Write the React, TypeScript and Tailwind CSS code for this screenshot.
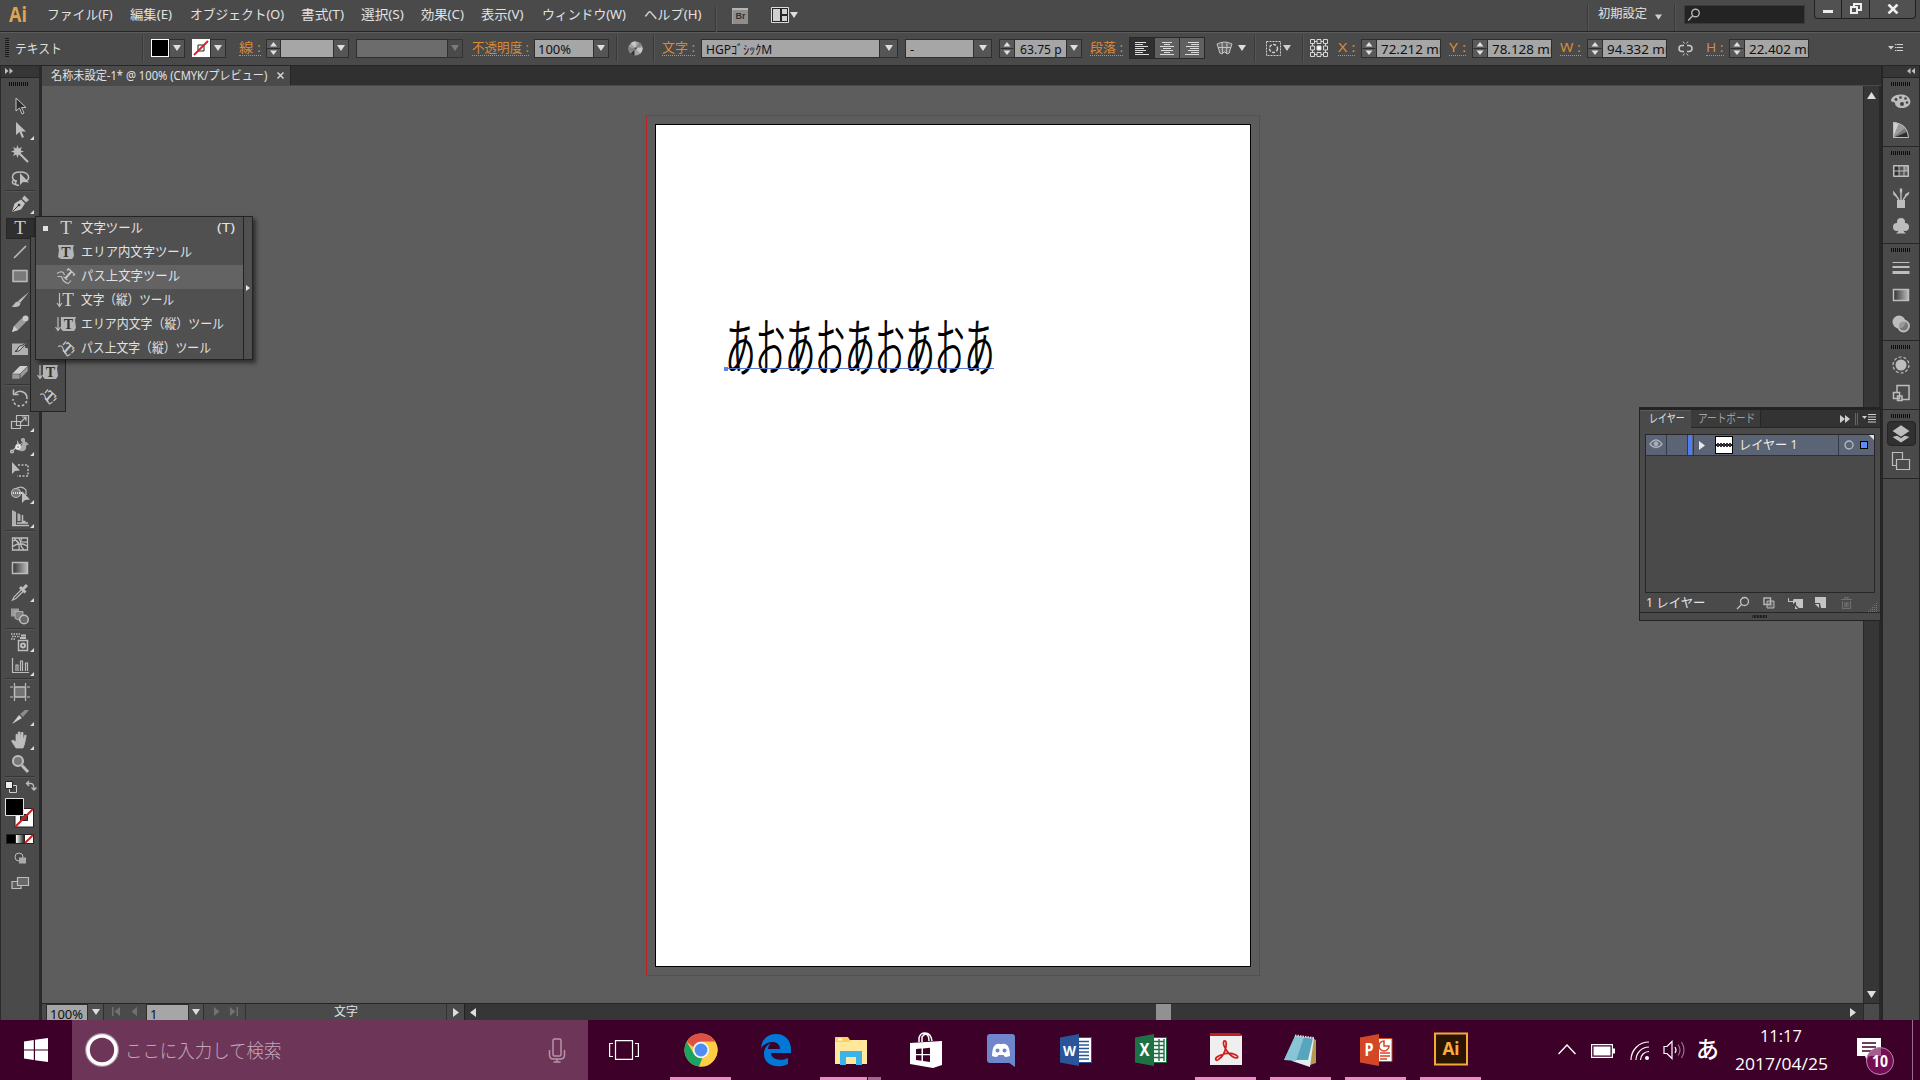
import React from 'react';

interface ChildProps {
  className?: string;
  children?: React.ReactNode;
}

// Squeezes (or stretches) one line of text to the width of its box.
const Fit: React.FC<ChildProps> = ({ className = '', children }) => {
  const outer = React.useRef<HTMLDivElement>(null);
  const inner = React.useRef<HTMLSpanElement>(null);
  const [scale, setScale] = React.useState(1);

  React.useLayoutEffect(() => {
    if (outer.current && inner.current && inner.current.offsetWidth > 0) {
      setScale(outer.current.clientWidth / inner.current.offsetWidth);
    }
  }, [children]);

  return (
    <div ref={outer} className={`shrink-0 whitespace-nowrap ${className}`}>
      <span ref={inner} className="inline-block origin-left" style={{ transform: `scaleX(${scale})` }}>
        {children}
      </span>
    </div>
  );
};

const Ico: React.FC<ChildProps> = ({ className = '', children }) => (
  <svg
    viewBox="0 0 24 24"
    className={`w-6 h-6 shrink-0 block ${className}`}
    fill="none"
    stroke="#bdbdbd"
    strokeWidth="1.5"
  >
    {children}
  </svg>
);

const Sep: React.FC<ChildProps> = ({ className = '' }) => (
  <div className={`w-[2px] h-[27px] shrink-0 bg-[#393939] border-r border-[#565656] ${className}`} />
);

const Caret: React.FC<ChildProps> = ({ className = 'text-[#dedede]' }) => (
  <svg viewBox="0 0 8 6" className={`w-2 h-1.5 shrink-0 ${className}`}>
    <path d="M0 0h8L4 6z" fill="currentColor" />
  </svg>
);

const DropButton: React.FC<ChildProps> = ({ className = '' }) => (
  <div className={`h-[19px] shrink-0 flex items-center justify-center bg-[#555555] border border-[#2e2e2e] ${className}`}>
    <Caret />
  </div>
);

const Spinner: React.FC<ChildProps> = ({ className = '' }) => (
  <div className={`h-[19px] shrink-0 bg-[#5a5a5a] border border-[#2e2e2e] ${className}`}>
    <svg viewBox="0 0 13 17" className="w-full h-full">
      <path d="M3 6.500h7L6.500 2zM3 10.500h7L6.500 15z" fill="#e0e0e0" />
      <path d="M0 8.500h13" stroke="#2e2e2e" />
    </svg>
  </div>
);

const Field: React.FC<ChildProps> = ({ className = '', children }) => (
  <div
    className={`h-[19px] shrink-0 overflow-hidden bg-[#a6a6a6] border border-[#2e2e2e] text-[#111] text-[13px] leading-[18px] ${className}`}
  >
    {children}
  </div>
);

const OrangeLabel: React.FC<ChildProps> = ({ className = '', children }) => (
  <Fit className={`h-[16px] text-[13px] leading-[15px] text-[#d98b36] border-b border-dotted border-[#d98b36] ${className}`}>
    {children}
  </Fit>
);

const Grip: React.FC<ChildProps> = ({ className = '' }) => (
  <svg viewBox="0 0 20 4" className={`w-5 h-1 shrink-0 ${className}`}>
    <path d="M0 2h20" stroke="#0d0d0d" strokeWidth="4" strokeDasharray="1 1" />
  </svg>
);

const MenuBar = () => (
  <div className="h-8 shrink-0 flex items-start bg-[#4a4a4a] border-b border-[#262626] text-[#e2e2e2] text-[13px] leading-[28px]">
    <Fit className="ml-[9px] w-[18px] font-['Open_Sans',sans-serif] font-bold text-[21px] leading-[28px] text-[#dfa551]">Ai</Fit>
    <Fit className="ml-[20px] w-[66px]">ファイル(F)</Fit>
    <Fit className="ml-[17px] w-[42px]">編集(E)</Fit>
    <Fit className="ml-[18px] w-[94px]">オブジェクト(O)</Fit>
    <Fit className="ml-[17px] w-[43px]">書式(T)</Fit>
    <Fit className="ml-[17px] w-[43px]">選択(S)</Fit>
    <Fit className="ml-[17px] w-[43px]">効果(C)</Fit>
    <Fit className="ml-[17px] w-[43px]">表示(V)</Fit>
    <Fit className="ml-[18px] w-[84px]">ウィンドウ(W)</Fit>
    <Fit className="ml-[18px] w-[57px]">ヘルプ(H)</Fit>
    <Sep className="ml-[14px] mt-1.5 h-[19px]" />
    <div className="ml-[15px] mt-2 w-4 h-4 shrink-0 bg-[#8e8e8e] border-t-2 border-l border-t-[#b5b5b5] border-l-[#a5a5a5] text-[9px] leading-[13px] text-center font-bold text-[#333] font-['Liberation_Sans',sans-serif]">
      Br
    </div>
    <svg viewBox="0 0 18 16" className="ml-[23px] mt-[7px] w-[18px] h-4 shrink-0">
      <path d="M.5.5h17v15H.5z" fill="#262626" stroke="#dcdcdc" />
      <path d="M2 2h7v12H2zM11 2h5v5h-5zM11 9h5v5h-5z" fill="#cfcfcf" />
    </svg>
    <Caret className="ml-px mt-3 text-[#dedede]" />
    <div className="flex-1" />
    <Sep className="mt-1 h-5" />
    <Fit className="ml-[9px] w-[49px] text-[12px] leading-[27px]">初期設定</Fit>
    <Caret className="ml-[8px] mt-[14px] w-[7px] h-1 text-[#cfcfcf]" />
    <Sep className="ml-[12px] mt-1 h-5" />
    <div className="ml-2 mt-[5px] w-[121px] h-[19px] shrink-0 bg-[#232323] border border-[#3a3a3a] flex items-center">
      <svg viewBox="0 0 14 14" className="ml-0.5 w-[14px] h-[14px]" fill="none" stroke="#b5b5b5" strokeWidth="1.4">
        <circle cx="8.500" cy="5" r="3.800" />
        <path d="M5.700 7.800L1.200 12.600" />
      </svg>
    </div>
    <div className="ml-[9px] mr-[4px] w-[102px] h-[19px] shrink-0 flex border border-t-0 border-[#202020] rounded-b bg-[#515151]">
      <div className="w-[27px] flex justify-center border-r border-[#202020]">
        <div className="mt-2.5 w-[10px] h-[3px] bg-[#ededed]" />
      </div>
      <div className="w-[28px] flex justify-center border-r border-[#202020]">
        <svg viewBox="0 0 12 12" className="mt-[3px] w-3 h-3" fill="none" stroke="#ededed" strokeWidth="2">
          <path d="M4 3V1h7v6H8M1 4h6v6H1z" />
        </svg>
      </div>
      <div className="flex-1 flex justify-center">
        <svg viewBox="0 0 12 10" className="mt-1 w-3 h-2.5" stroke="#ededed" strokeWidth="2.600">
          <path d="M1.500.5l9 9M10.500.5l-9 9" />
        </svg>
      </div>
    </div>
  </div>
);

const AlignIcon: React.FC<{ d: string }> = ({ d }) => (
  <svg viewBox="0 0 14 15" className="w-[14px] h-[15px]">
    <path d={d} stroke="#dcdcdc" />
  </svg>
);

const ControlBar = () => (
  <div className="h-[34px] shrink-0 flex items-center pb-[2px] bg-[#4a4a4a] border-t border-b border-t-[#5c5c5c] border-b-[#262626]">
    <svg viewBox="0 0 4 20" className="ml-[5px] w-1 h-5 shrink-0">
      <path d="M2 0v20" stroke="#1c1c1c" strokeWidth="4" strokeDasharray="1 1" />
    </svg>
    <Fit className="ml-[6px] w-[47px] text-[13px] leading-[18px] text-[#dedede]">テキスト</Fit>
    <Sep className="ml-[80px]" />
    <div className="ml-[7px] w-[18px] h-[18px] shrink-0 bg-black border border-white" />
    <DropButton className="w-4" />
    <svg viewBox="0 0 18 18" className="ml-[7px] w-[18px] h-[18px] shrink-0">
      <path d="M0 0h18v18H0z" fill="#fff" />
      <path d="M6 6h6v6H6z" fill="none" stroke="#222" />
      <path d="M2 16L16 2" stroke="#d8232a" strokeWidth="2" />
    </svg>
    <DropButton className="w-4" />
    <OrangeLabel className="ml-[13px] w-[22px]">線 :</OrangeLabel>
    <Spinner className="ml-[5px] w-[15px]" />
    <Field className="w-[53px] border-l-0" />
    <DropButton className="w-[15px] border-l-0" />
    <div className="ml-[7px] w-[92px] h-[19px] shrink-0 bg-[#6c6c6c] border border-[#2e2e2e]" />
    <div className="w-[15px] h-[19px] shrink-0 flex items-center justify-center border border-l-0 border-[#333]">
      <Caret className="text-[#7b7b7b]" />
    </div>
    <OrangeLabel className="ml-[9px] w-[57px]">不透明度 :</OrangeLabel>
    <Field className="ml-[5px] w-[60px]">
      <Fit className="ml-[3px] w-[33px]">100%</Fit>
    </Field>
    <DropButton className="w-[15px] border-l-0" />
    <Sep className="ml-[7px]" />
    <svg viewBox="0 0 15 15" className="ml-[10px] w-[15px] h-[15px] shrink-0">
      <circle cx="7.500" cy="7.500" r="7" fill="#a3a3a3" />
      <path d="M7.500 7.500L3 2a7 7 0 015-1.400zM7.500 7.500l7-1a7 7 0 01-2 6z" fill="#c9c9c9" />
      <path d="M7.500 7.500L2 12A7 7 0 01.7 6zM7.500 7.500l4-6a7 7 0 012.500 3z" fill="#838383" />
      <path d="M6.500 8.500L2.500 12.500a7 7 0 004 2z" fill="#333" />
      <circle cx="7.500" cy="7.500" r="1.200" fill="#555" />
    </svg>
    <Sep className="ml-[10px]" />
    <OrangeLabel className="ml-[7px] w-[33px]">文字 :</OrangeLabel>
    <Field className="ml-[6px] w-[179px] leading-[15px]">
      <Fit className="ml-1 w-[66px]">HGPｺﾞｼｯｸM</Fit>
    </Field>
    <DropButton className="w-[18px] border-l-0" />
    <Field className="ml-[7px] w-[69px]">
      <span className="ml-1">-</span>
    </Field>
    <DropButton className="w-[18px] border-l-0" />
    <Spinner className="ml-[7px] w-[16px]" />
    <Field className="w-[52px] border-l-0">
      <Fit className="ml-[5px] w-[42px]">63.75 p</Fit>
    </Field>
    <DropButton className="w-[15px] border-l-0" />
    <OrangeLabel className="ml-[8px] w-[33px]">段落 :</OrangeLabel>
    <div className="ml-[6px] w-[76px] h-[22px] shrink-0 flex bg-[#606060] border border-[#292929]">
      <div className="w-[25px] flex items-center justify-center bg-[#303030] border-r border-[#292929]">
        <AlignIcon d="M0 1.500h11M0 3.500h8M0 5.500h13M0 7.500h9M0 9.500h11M0 11.500h8M0 13.500h14" />
      </div>
      <div className="w-[25px] flex items-center justify-center border-r border-[#292929]">
        <AlignIcon d="M2 1.500h10M4 3.500h6M0 5.500h14M3 7.500h8M1 9.500h12M4 11.500h6M0 13.500h14" />
      </div>
      <div className="flex-1 flex items-center justify-center">
        <AlignIcon d="M3 1.500h11M6 3.500h8M1 5.500h13M5 7.500h9M3 9.500h11M6 11.500h8M0 13.500h14" />
      </div>
    </div>
    <svg viewBox="0 0 17 14" className="ml-[11px] w-[17px] h-[14px] shrink-0" fill="#686868" stroke="#c4c4c4">
      <path d="M1 3q7.500-4 15 0l-2 6q0 4-3 4l-2-2H8l-2 2q-3 0-3-4z" />
      <path d="M6 1.500l.5 11M11 1.500l-.5 11M2 6.500h13" />
    </svg>
    <Caret className="ml-[5px] text-[#dedede]" />
    <Sep className="ml-[8px]" />
    <svg viewBox="0 0 15 15" className="ml-[10px] w-[15px] h-[15px] shrink-0" fill="none" stroke="#cfcfcf">
      <path d="M.5.5h14v14H.5z" strokeDasharray="2 1" />
      <circle cx="7.500" cy="7.500" r="4" strokeDasharray="3 1.500" strokeWidth="1.500" />
    </svg>
    <Caret className="ml-[2px] text-[#cfcfcf]" />
    <Sep className="ml-[11px]" />
    <svg viewBox="0 0 20 20" className="ml-[5px] w-5 h-5 shrink-0" fill="none" stroke="#d6d6d6">
      <path d="M1.500 1.500h4v4h-4zM8 1.500h4v4H8zM14.500 1.500h4v4h-4zM1.500 8h4v4h-4zM14.500 8h4v4h-4zM1.500 14.500h4v4h-4zM8 14.500h4v4H8zM14.500 14.500h4v4h-4z" />
      <path d="M5.500 3.500H8M12 3.500h2.500M5.500 16.500H8M12 16.500h2.500M3.500 5.500V8M3.500 12v2.500M16.500 5.500V8M16.500 12v2.500" />
      <path d="M8 8h4v4H8z" fill="#fff" />
    </svg>
    <OrangeLabel className="ml-[9px] w-[17px]">X :</OrangeLabel>
    <Spinner className="ml-[6px] w-4" />
    <Field className="w-[64px] border-l-0"><Fit className="ml-1 w-[70px]">72.212 mm</Fit></Field>
    <OrangeLabel className="ml-[8px] w-[17px]">Y :</OrangeLabel>
    <Spinner className="ml-[6px] w-4" />
    <Field className="w-[64px] border-l-0"><Fit className="ml-1 w-[70px]">78.128 mm</Fit></Field>
    <OrangeLabel className="ml-[8px] w-[21px]">W :</OrangeLabel>
    <Spinner className="ml-[6px] w-4" />
    <Field className="w-[64px] border-l-0"><Fit className="ml-1 w-[70px]">94.332 mm</Fit></Field>
    <svg viewBox="0 0 15 15" className="ml-[11px] w-[15px] h-[15px] shrink-0" fill="none" stroke="#c9c9c9" strokeWidth="1.500">
      <path d="M6 4.500H4a3 3 0 000 6h2M9 4.500h2a3 3 0 010 6H9" />
      <path d="M5 .5l1.500 2M10 .5l-1.500 2M5 14.500l1.500-2M10 14.500l-1.500-2" strokeWidth="1" />
    </svg>
    <OrangeLabel className="ml-[13px] w-[18px]">H :</OrangeLabel>
    <Spinner className="ml-[5px] w-4" />
    <Field className="w-[64px] border-l-0"><Fit className="ml-1 w-[70px]">22.402 mm</Fit></Field>
    <div className="flex-1" />
    <svg viewBox="0 0 15 10" className="mr-[17px] w-[15px] h-2.5 shrink-0">
      <path d="M0 3h6L3 6.500z" fill="#d0d0d0" />
      <path d="M7 1.500h8M7 4.500h8M7 7.500h8" stroke="#d0d0d0" strokeDasharray="1.500 .5 8" />
    </svg>
  </div>
);

const AreaTypeIcon = () => (
  <>
    <path d="M4 5h16l-1 3 1 8-2 3H7l-3-2 1-7z" fill="#b5b5b5" stroke="none" />
    <text x="12" y="17" textAnchor="middle" fontSize="14" fontWeight="bold" fill="#333" stroke="none" className="font-['Liberation_Serif',serif]">T</text>
  </>
);

const VerticalAreaTypeIcon = () => (
  <>
    <path d="M4 5v13M1.500 15L4 18.500 6.500 15" strokeWidth="1.200" />
    <path d="M7 5h15l-1 3 1 8-2 3H9l-2-2z" fill="#b5b5b5" stroke="none" />
    <text x="14.500" y="17" textAnchor="middle" fontSize="14" fontWeight="bold" fill="#333" stroke="none" className="font-['Liberation_Serif',serif]">T</text>
  </>
);

const PathTypeIcon = () => (
  <>
    <path d="M3 9.500q6-4 7.500 1.500" strokeWidth="1.100" />
    <path d="M3.500 12.500l4 0q1.500 6 7 7l2.500-3" strokeWidth="1.100" />
    <text x="14" y="15" textAnchor="middle" fontSize="15" fill="#d0d0d0" stroke="#d0d0d0" strokeWidth=".4" transform="rotate(42 13 11)" className="font-['Liberation_Serif',serif]">T</text>
  </>
);

const VerticalPathTypeIcon = () => (
  <>
    <path d="M4 10.500q4-2 5 2t4.500 7.500l3-2" strokeWidth="1.100" />
    <text x="14" y="17" textAnchor="middle" fontSize="15" fill="#d0d0d0" stroke="#d0d0d0" strokeWidth=".4" transform="rotate(42 13 12)" className="font-['Liberation_Serif',serif]">T</text>
    <path d="M9 9l3-3.500M17.500 17l3-3" strokeWidth="1.400" />
  </>
);

const SerifT: React.FC<{ x?: number }> = ({ x = 12 }) => (
  <text x={x} y="18" textAnchor="middle" fontSize="19" fill="#d0d0d0" stroke="none" className="font-['Liberation_Serif',serif]">T</text>
);

const toolGroups: { more: boolean; active?: boolean; art: React.ReactNode }[][] = [
  [
    { more: false, art: <path d="M8 4v13l3.500-3 2.500 6 2-1-2.500-5.500H18z" fill="#2d2d2d" stroke="#c4c4c4" strokeWidth="1" /> },
    { more: true, art: <path d="M8 4v13l3.500-3 2.500 6 2-1-2.500-5.500H18z" fill="#bdbdbd" stroke="none" /> },
    {
      more: false,
      art: (
        <>
          <path d="M9.500 3l1.200 3.500L14 5l-1.500 3.300L16 9.500l-3.500 1.200L14 14l-3.300-1.500L9.500 16l-1.200-3.500L5 14l1.500-3.300L3 9.500l3.500-1.200L5 5l3.300 1.500z" fill="#bdbdbd" stroke="none" />
          <path d="M12 12l8 8" strokeWidth="2.200" />
        </>
      ),
    },
    {
      more: false,
      art: (
        <>
          <path d="M9 15c-6 0-7-9 3-9s10 7 6 9M6 14c-3 1-1 5 1 4s0-3-1-4M7 18q2 2 4 1" />
          <path d="M12 7v12l3-3 6 .5z" fill="#bdbdbd" stroke="none" />
        </>
      ),
    },
  ],
  [
    {
      more: true,
      art: (
        <>
          <path d="M4 20l2.500-8.500L13 7.500l4 4-4 6z" fill="#c4c4c4" stroke="none" />
          <path d="M4.500 19.500l6-6" stroke="#444" strokeWidth="1" />
          <path d="M14 6.500l4 4 3-2.500-4.500-4.500z" fill="#bdbdbd" stroke="none" />
          <circle cx="11" cy="13" r="1.300" fill="#333" stroke="none" />
        </>
      ),
    },
    { more: false, active: true, art: <SerifT /> },
    { more: false, art: <path d="M6 18L18 6" /> },
    { more: false, art: <path d="M5 6.500h14v11H5z" fill="#7a7a7a" /> },
    { more: false, art: <path d="M21 4l-9 11-2-2zM10 13.500l2.500 2c-1 4-5 4-9 3 3-1 3-5 6.500-5z" fill="#bdbdbd" stroke="none" /> },
    {
      more: false,
      art: (
        <>
          <path d="M4 20l2-6 8-8 4 4-8 8z" fill="#9c9c9c" stroke="none" />
          <path d="M4 20l2-6 4 4z" fill="#d0d0d0" stroke="none" />
          <circle cx="17.500" cy="6.500" r="3" fill="#c9c9c9" stroke="none" />
        </>
      ),
    },
    {
      more: false,
      art: (
        <>
          <path d="M4 7.500h13v4l3 1v6.500H4z" fill="#b0b0b0" stroke="none" />
          <path d="M21.500 4l-8 8.500q-2 3.500-6.500 3 2.500-1 3-3.500 1-2.500 4-2.500z" fill="#c9c9c9" stroke="#3a3a3a" strokeWidth="1" />
        </>
      ),
    },
    {
      more: false,
      art: (
        <>
          <path d="M4 14l8-8h8l-8 8z" fill="#cfcfcf" stroke="none" />
          <path d="M4 14h8v5H4zM12 14l8-8v5l-8 8z" fill="#989898" stroke="#555" strokeWidth=".6" />
        </>
      ),
    },
  ],
  [
    { more: false, art: <path d="M7 7.500a7 7 0 0112 5.500 7 7 0 01-14 0M5.500 3.500v5h5" strokeDasharray="17 2 2.500 2 2.500 2 2.500 2 2.500 2 2.500 2" strokeWidth="1.600" /> },
    { more: true, art: <path d="M3.500 11.500h9v7h-9zM8.500 5.500h12v10h-12zM12 13l6-6M14 7h4v4" strokeWidth="1.200" /> },
    {
      more: true,
      art: (
        <>
          <path d="M4 17q6-6 5-11l4 6q4-8 8-1-3-1-3 3c0 4-6 4-10 1z" fill="#aaa" stroke="none" />
          <path d="M4 17L17 7" strokeWidth="1" />
          <circle cx="10" cy="13" r="2" stroke="#eee" />
          <circle cx="4" cy="17.500" r="1.300" />
          <circle cx="15" cy="6" r="1.300" />
        </>
      ),
    },
    {
      more: false,
      art: (
        <>
          <path d="M10 7h10v11H9" strokeDasharray="2 1.500" />
          <path d="M4 4v12l3-3 5-.5z" fill="#bdbdbd" stroke="none" />
        </>
      ),
    },
    {
      more: true,
      art: (
        <>
          <circle cx="8" cy="11" r="4.500" fill="#777" strokeWidth="1.200" />
          <path d="M8 6.500Q14 3 18 8v5" strokeWidth="1.200" />
          <path d="M5 11h10" stroke="#fff" strokeDasharray="1 1" />
          <path d="M14 9v12l3-3 5-.5z" fill="#bdbdbd" stroke="none" />
        </>
      ),
    },
    {
      more: true,
      art: (
        <>
          <path d="M4 4l4 2v13H4zM9.500 7l3 1.500V15h-3z" fill="#b0b0b0" stroke="none" />
          <path d="M14.500 9v6.500h3M9 17h11M4 19.500h17" />
        </>
      ),
    },
  ],
  [
    { more: false, art: <path d="M4.500 6h15v12h-15zM5 9q7-3 6 9M4 15q8-6 15-1M11 6q0 5 8 4M14 6q-4 6 2 12M6 6l5 6" strokeWidth="1.300" /> },
    {
      more: false,
      art: (
        <>
          <defs>
            <linearGradient id="toolGradient">
              <stop offset="0" stopColor="#333" />
              <stop offset="1" stopColor="#bbb" />
            </linearGradient>
          </defs>
          <path d="M4.500 6.500h15v11h-15z" fill="url(#toolGradient)" />
        </>
      ),
    },
    {
      more: true,
      art: (
        <>
          <path d="M14 9l-8 8-1.500 3L8 18.500l8-8" strokeWidth="1.200" />
          <path d="M12 7l5.500 5.500M14.500 9.500L19 5" strokeWidth="3" />
        </>
      ),
    },
    {
      more: false,
      art: (
        <>
          <path d="M3 4.500h8v8H3z" fill="#999" stroke="none" />
          <path d="M7 7.500h8v8l-3 1-5-2z" fill="#808080" strokeWidth=".8" />
          <circle cx="16" cy="15.500" r="4.300" fill="#686868" />
        </>
      ),
    },
  ],
  [
    {
      more: true,
      art: (
        <>
          <path d="M10.500 10.500h9v10h-9z" />
          <path d="M12 8h6M13 5.500h5" strokeWidth="2" />
          <circle cx="15" cy="15.500" r="2" strokeWidth="2" />
          <path d="M3 4h9M4 6.500h8M3 9h5" strokeDasharray="1.500 1" />
        </>
      ),
    },
    { more: true, art: <path d="M4.500 4v14.500H21M8 17v-6h2v6M12.500 17V7h2v10M17.500 17V9h2v8" strokeWidth="1.200" /> },
  ],
  [
    {
      more: false,
      art: (
        <>
          <path d="M6.500 7h11v10h-11z" fill="#737373" />
          <path d="M2 7h3M2 17h3M19 7h3M19 17h3M6.500 3v3M17.500 3v3M6.500 18v3M17.500 18v3" strokeWidth="1.200" />
        </>
      ),
    },
    {
      more: true,
      art: (
        <>
          <path d="M4 20l7-9 3 3z" fill="#d0d0d0" stroke="none" />
          <path d="M12 10l5-4h4l-6 7z" fill="#8c8c8c" stroke="none" />
        </>
      ),
    },
    {
      more: true,
      art: <path d="M8 20l-4.500-7 1.500-1 3 2V6.500h1.500V11l.8-7h1.700v7l1.200-6.500H15V12l1.800-5 1.400.5L16.500 16l-1.500 4z" fill="#bdbdbd" stroke="#bdbdbd" strokeWidth=".8" />,
    },
    {
      more: false,
      art: (
        <>
          <circle cx="10" cy="9" r="5" fill="#777" strokeWidth="2" />
          <path d="M14 13.500l6 6.500" strokeWidth="3" />
        </>
      ),
    },
  ],
];

const Toolbar = () => (
  <div className="w-[42px] shrink-0 flex flex-col bg-[#4a4a4a] border-l border-r-[3px] border-[#2a2a2a]">
    <div className="h-[12px] shrink-0 bg-[#363636] border-b border-[#252525] pl-1 pt-[2px]">
      <svg viewBox="0 0 8 6" className="w-2 h-1.5">
        <path d="M0 0l3.500 3L0 6zM4.500 0L8 3 4.500 6z" fill="#c0c0c0" />
      </svg>
    </div>
    <div className="h-[16px] shrink-0 pt-1 pl-2">
      <Grip />
    </div>
    {toolGroups.map((group, g) => (
      <div key={g} className="shrink-0">
        {group.map((tool, i) => (
          <div key={i} className="relative h-6 pl-[7px]">
            {tool.active && <div className="absolute left-[5px] top-0.5 w-[29px] h-[21px] bg-[#2f2f2f] border border-[#262626]" />}
            <Ico className="relative">{tool.art}</Ico>
            {tool.more && (
              <svg viewBox="0 0 4 4" className="absolute left-[29px] top-[18px] w-1 h-1">
                <path d="M4 0v4H0z" fill="#dcdcdc" />
              </svg>
            )}
          </div>
        ))}
        <div className="ml-1 w-[30px] h-0.5 bg-[#353535] border-b border-[#565656]" />
      </div>
    ))}
    <div className="h-[20px] shrink-0 flex">
      <svg viewBox="0 0 12 12" className="ml-1 mt-[3px] w-3 h-3" strokeWidth="1">
        <path d="M4.500 4.500h7v7h-7z" fill="#444" stroke="#ccc" />
        <path d="M.5.5h7v7h-7z" fill="#eee" stroke="#222" />
      </svg>
      <svg viewBox="0 0 12 12" className="ml-[8px] mt-[2px] w-3 h-3" fill="none" stroke="#bdbdbd" strokeWidth="1.300">
        <path d="M4 1L1.500 3.500 4 6M2 3.500h4q3 0 3 6M6.500 7.500L9 10l2.500-2.500" />
      </svg>
    </div>
    {/* fill / stroke swatches */}
    <svg viewBox="0 0 30 30" className="ml-[4px] w-[30px] h-[30px] shrink-0">
      <path d="M10 10.500h18.500V29H10z" fill="#fff" stroke="#222" />
      <path d="M15.500 16.500h7v6h-7z" fill="#4a4a4a" stroke="#222" />
      <path d="M10.500 28.500L28 11" stroke="#cf1f1f" strokeWidth="2" />
      <path d="M.5 .5H18.500v17H.5z" fill="#000" stroke="#e0e0e0" />
    </svg>
    <svg viewBox="0 0 28 10" className="ml-[5px] mt-[6px] w-7 h-2.5 shrink-0">
      <defs>
        <linearGradient id="modeGradient">
          <stop offset="0" stopColor="#fff" />
          <stop offset="1" stopColor="#222" />
        </linearGradient>
      </defs>
      <path d="M0 0h28v10H0z" fill="#222" />
      <path d="M1 1h8v8H1z" fill="#000" />
      <path d="M10 1h8v8h-8z" fill="url(#modeGradient)" />
      <path d="M19 1h8v8h-8z" fill="#fff" />
      <path d="M19 9l8-8" stroke="#cf1f1f" strokeWidth="2" />
    </svg>
    <Ico className="ml-[7px] mt-[3px]">
      <circle cx="11" cy="10" r="4" strokeWidth="1" />
      <path d="M11 10.500h7v6h-7z" fill="#aaa" stroke="none" />
    </Ico>
    <Ico className="ml-[7px]">
      <path d="M4 10.500h9v7H4z" fill="#5c5c5c" strokeWidth="1.200" />
      <path d="M9.500 6.500h11v8h-11z" fill="#686868" strokeWidth="1.200" />
    </Ico>
  </div>
);

const typeTools = [
  { width: 'w-[62px]', label: '文字ツール', art: <SerifT />, hot: false },
  { width: 'w-[111px]', label: 'エリア内文字ツール', art: <AreaTypeIcon />, hot: false },
  { width: 'w-[99px]', label: 'パス上文字ツール', art: <PathTypeIcon />, hot: true },
  {
    width: 'w-[93px]',
    label: '文字（縦）ツール',
    art: (
      <>
        <path d="M5.500 5v13M3 15l2.500 3.500L8 15" strokeWidth="1.200" />
        <SerifT x={14} />
      </>
    ),
    hot: false,
  },
  { width: 'w-[143px]', label: 'エリア内文字（縦）ツール', art: <VerticalAreaTypeIcon />, hot: false },
  { width: 'w-[130px]', label: 'パス上文字（縦）ツール', art: <VerticalPathTypeIcon />, hot: false },
];

const TypeToolMenu = () => (
  <div className="absolute left-[35px] top-[216px] w-[218px] h-[144px] flex bg-[#505050] border border-[#232323] shadow-[3px_3px_4px_rgba(0,0,0,0.5)]">
    <div className="w-[207px] text-[13px] leading-[21px] text-[#e2e2e2]">
      {typeTools.map((t, i) => (
        <div key={t.label} className={`flex h-[24px] ${t.hot ? 'bg-[#636363]' : ''}`}>
          <div className={`ml-[7px] mt-[9px] w-[5px] h-[5px] ${i === 0 ? 'bg-[#e2e2e2]' : ''}`} />
          <Ico className="ml-[6px] -mt-px">{t.art}</Ico>
          <Fit className={`ml-[3px] ${t.width}`}>{t.label}</Fit>
          {i === 0 && <Fit className="ml-[74px] w-[18px]">(T)</Fit>}
        </div>
      ))}
    </div>
    <div className="flex-1 flex items-center bg-[#505050] border-l border-[#232323] pl-[2px]">
      <svg viewBox="0 0 4 6" className="w-1 h-1.5">
        <path d="M0 0l4 3-4 3z" fill="#e6e6e6" />
      </svg>
    </div>
  </div>
);

const TearOffPanel = () => (
  <div className="absolute left-[30px] top-[236px] w-[36px] h-[176px] pt-[123px] pl-[5px] bg-[#4a4a4a] border border-[#232323]">
    <Ico>
      <VerticalAreaTypeIcon />
    </Ico>
    <Ico>
      <VerticalPathTypeIcon />
    </Ico>
  </div>
);

const Canvas = () => (
  <div className="relative flex-1 bg-[#5d5d5d] overflow-hidden">
    <div className="absolute left-[604px] top-[29px] w-[614px] h-[861px] border border-[#bc2328]" />
    <div className="absolute left-[613px] top-[38px] w-[596px] h-[843px] bg-white border border-black">
      <Fit className="absolute left-[69px] top-[190px] w-[269px] text-[63.750px] leading-[64px] font-light [text-shadow:2px_0_0_#000] text-black">
        あおあおあおあおあ
      </Fit>
      <div className="absolute left-[68px] top-[243px] w-[270px] h-px bg-[#5277cc]" />
      <div className="absolute left-[68px] top-[242px] w-1 h-1 bg-[#5b84e6]" />
    </div>
  </div>
);

const StatusBar = () => (
  <div className="h-[17px] shrink-0 flex bg-[#4a4a4a] border-t border-[#252525]">
    <div className="ml-[4px] w-[42px] h-4 shrink-0 overflow-hidden bg-[#a6a6a6] border border-b-0 border-[#2e2e2e] text-[13px] leading-[18px] text-[#111]">
      <Fit className="ml-[3px] w-[33px]">100%</Fit>
    </div>
    <div className="w-[16px] shrink-0 flex items-center justify-center bg-[#505050] border-r border-[#2e2e2e]">
      <Caret />
    </div>
    <svg viewBox="0 0 26 9" className="ml-[8px] mt-[3px] w-[26px] h-[9px] shrink-0" fill="#717171">
      <path d="M0 0h1.500v9H0zM8 0v9L2.500 4.500zM25 0v9l-5.500-4.500z" />
    </svg>
    <div className="ml-[8px] w-[43px] h-4 shrink-0 overflow-hidden bg-[#a6a6a6] border border-b-0 border-[#2e2e2e] text-[13px] leading-[18px] text-[#111] pl-[3px]">
      1
    </div>
    <div className="w-[15px] shrink-0 flex items-center justify-center bg-[#505050] border-r border-[#2e2e2e]">
      <Caret />
    </div>
    <svg viewBox="0 0 26 9" className="ml-[9px] mt-[3px] w-[26px] h-[9px] shrink-0" fill="#717171">
      <path d="M1 0v9l5.500-4.500zM17 0v9l5.500-4.500zM23.500 0H25v9h-1.500z" />
    </svg>
    <div className="ml-[6px] w-[202px] shrink-0 border-l border-r border-[#333] flex justify-center text-[12px] leading-[15px] text-[#e2e2e2]">
      文字
    </div>
    <div className="w-[18px] shrink-0 flex items-center justify-center border-r border-[#222]">
      <svg viewBox="0 0 6 9" className="w-1.5 h-[9px]">
        <path d="M0 0v9l6-4.500z" fill="#dedede" />
      </svg>
    </div>
    <div className="flex-1 flex items-center bg-[#363636]">
      <svg viewBox="0 0 6 9" className="ml-[5px] w-1.5 h-[9px]">
        <path d="M6 0v9L0 4.500z" fill="#dedede" />
      </svg>
      <div className="ml-[680px] w-[15px] h-full bg-[#919191]" />
      <div className="flex-1" />
      <svg viewBox="0 0 6 9" className="mr-[7px] w-1.5 h-[9px]">
        <path d="M0 0v9l6-4.500z" fill="#dedede" />
      </svg>
    </div>
    <div className="w-[18px] shrink-0 bg-[#4a4a4a] border-l border-r-2 border-[#2a2a2a]" />
  </div>
);

const Dock = () => (
  <div className="w-[39px] shrink-0 flex flex-col bg-[#4a4a4a] border-l-2 border-r border-[#262626]">
    <div className="h-[12px] shrink-0 flex justify-end bg-[#363636] border-b border-[#252525] pr-1 pt-[2px]">
      <svg viewBox="0 0 8 6" className="w-2 h-1.5">
        <path d="M3.500 0L0 3l3.500 3zM8 0L4.500 3 8 6z" fill="#c0c0c0" />
      </svg>
    </div>
    <div className="h-[69px] shrink-0 flex flex-col items-center border-b border-[#262626]">
      <Grip className="mt-1" />
      <Ico className="mt-[4px]">
        <path d="M13 4.500c-7-.5-11 3-11 6 0 2 3 1 4 2.500 0 2 1 3 2.500 4s6 2 10-.5c6-4 2-11.500-5.500-12z" fill="#bdbdbd" stroke="none" />
        <g fill="#444" stroke="none">
          <circle cx="7" cy="9.500" r="1.400" /><circle cx="11.500" cy="7.500" r="1.300" /><circle cx="16.500" cy="8.500" r="1.300" />
          <circle cx="18" cy="12.500" r="1.300" /><circle cx="13" cy="14" r="2" />
        </g>
      </Ico>
      <Ico className="mt-[4px]">
        <path d="M4 4v16h16Q19 5 4 4z" fill="#777" stroke="none" />
        <path d="M4 20V4q3 0 6 1.500z" fill="#d0d0d0" stroke="none" />
        <path d="M4 20l6-14.500q4 2 6 4.500z" fill="#9a9a9a" stroke="none" />
        <path d="M4 20l14-6 2 6z" fill="#2e2e2e" stroke="none" />
        <path d="M4.500 4.500v15h15Q18.500 5.500 4.500 4.500z" strokeWidth="1" />
      </Ico>
    </div>
    <div className="h-[97px] shrink-0 flex flex-col items-center border-b border-[#262626]">
      <Grip className="mt-[4px]" />
      <Ico className="mt-[4px]">
        <path d="M4.500 6.500h15v11h-15z" fill="#bdbdbd" stroke="#bdbdbd" strokeWidth="1" />
        <path d="M5.500 7.500h4v4h-4zM5.500 12.500h4v4h-4z" fill="#2e2e2e" stroke="none" />
        <path d="M10.500 7.500h4v4h-4zM15.500 12.500h3v4h-3zM10.500 12.500h4v4h-4z" fill="#555" stroke="none" />
        <path d="M15.500 7.500h3v4h-3z" fill="#888" stroke="none" />
      </Ico>
      <Ico className="mt-[4px]">
        <path d="M8 13h8v8H8z" fill="#bdbdbd" stroke="none" />
        <path d="M10 13L6 7M12 13V3M14 13l4-6" strokeWidth="1.400" />
        <path d="M4 3.500q0 3 .5 4.500l3 2q0-3-3.500-6.500zM20.500 4.500q-.5 4-3.500 5l-1-2zM10.800 1.500h2.400v4h-2.400z" fill="#bdbdbd" stroke="none" />
      </Ico>
      <Ico className="mt-[3px]">
        <g fill="#bdbdbd" stroke="none">
          <circle cx="12" cy="8" r="4" /><circle cx="8" cy="13" r="4" /><circle cx="16" cy="13" r="4" />
          <path d="M11 11h2q0 6 4 8.500H7q4-2.500 4-8.500z" />
        </g>
      </Ico>
    </div>
    <div className="h-[97px] shrink-0 flex flex-col items-center border-b border-[#262626]">
      <Grip className="mt-[4px]" />
      <Ico className="mt-[4px]">
        <path d="M3.500 6.500h17" strokeWidth="1" />
        <path d="M3.500 11h17" strokeWidth="2" />
        <path d="M3.500 16.500h17" strokeWidth="3" />
      </Ico>
      <Ico className="mt-[3px]">
        <path d="M4.500 6.500h15v11h-15z" fill="url(#toolGradient)" />
      </Ico>
      <Ico className="mt-[5px]">
        <circle cx="10" cy="10" r="6.500" fill="#bdbdbd" stroke="none" />
        <circle cx="14.500" cy="14" r="5.500" fill="#8a8a8a" fillOpacity=".7" strokeWidth="1.800" />
      </Ico>
    </div>
    <div className="h-[69px] shrink-0 flex flex-col items-center border-b border-[#262626]">
      <Grip className="mt-[4px]" />
      <Ico className="mt-[4px]">
        <circle cx="12" cy="12" r="5.500" fill="#bdbdbd" stroke="none" />
        <circle cx="12" cy="12" r="8" strokeDasharray="3 2" strokeWidth="1.200" />
      </Ico>
      <Ico className="mt-[4px]">
        <path d="M8 11V4.500h12v14h-7M4.500 11.500h6v6h-6zM8.500 15h4.500v4.500H8.500z" />
      </Ico>
    </div>
    <div className="h-[69px] shrink-0 flex flex-col items-center border-b border-[#262626]">
      <Grip className="mt-[4px]" />
      <div className="mt-[3px] w-[29px] h-[25px] bg-[#303030] border border-[#242424] rounded-sm flex justify-center">
        <Ico>
          <path d="M12 12.500l-8.500 2.500L12 20.500l8.500-5.500z" fill="#bdbdbd" stroke="none" />
          <path d="M12 2.500l9.500 6.500-9.500 6.500L2.500 9z" fill="#bdbdbd" stroke="#303030" strokeWidth="1.200" />
        </Ico>
      </div>
      <Ico className="mt-[3px]">
        <path d="M8 16.500H3.500v-13h10V10M7.500 10.500h13v10h-13z" strokeWidth="1.200" />
      </Ico>
    </div>
  </div>
);

const LayersPanel = () => (
  <div className="absolute left-[1639px] top-[407px] w-[242px] h-[214px] flex flex-col bg-[#4a4a4a] border border-t-[3px] border-[#232323]">
    <div className="h-[18px] shrink-0 flex bg-[#333] text-[12px] leading-[17px]">
      <div className="w-[51px] bg-[#4a4a4a] border-t border-[#5c5c5c] text-[#e2e2e2] pl-[9px]">
        <Fit className="w-[36px] leading-[16px]">レイヤー</Fit>
      </div>
      <div className="w-[70px] border-b border-r border-[#262626] pl-[7px] bg-[#3b3b3b] text-[#a0a0a0]">
        <Fit className="w-[57px] leading-[18px]">アートボード</Fit>
      </div>
      <div className="flex-1 border-b border-[#262626] flex items-center">
        <svg viewBox="0 0 10 8" className="ml-[79px] w-2.5 h-2">
          <path d="M0 0l5 4-5 4zM5 0l5 4-5 4z" fill="#cfcfcf" />
        </svg>
        <div className="ml-[5px] w-[3px] h-3 border-l border-r border-[#666]" />
        <svg viewBox="0 0 14 9" className="ml-[4px] w-[14px] h-[9px]">
          <path d="M0 2h5L2.500 5z" fill="#cfcfcf" />
          <path d="M6 .5h8M6 3h8M6 5.500h8M6 8h8" stroke="#cfcfcf" />
        </svg>
      </div>
    </div>
    <div className="ml-[5px] mt-[6px] w-[230px] h-[159px] shrink-0 border border-[#272727]">
      <div className="relative h-[21px] flex bg-[#5a6474] border-b border-[#2d323a]">
        <div className="w-[21px] border-r border-[#343a44] flex items-center justify-center">
          <svg viewBox="0 0 14 10" className="mr-px mb-0.5 w-[14px] h-2.5" fill="none" stroke="#a9b0ba">
            <path d="M1 5q6-8 12 0-6 7-12 0z" strokeWidth="1.300" />
            <circle cx="7" cy="4.800" r="2" fill="#a9b0ba" />
          </svg>
        </div>
        <div className="w-[21px] border-r border-[#343a44]" />
        <div className="w-[4px] bg-[#4f7cf0]" />
        <div className="w-[2px] border-r border-[#343a44]" />
        <svg viewBox="0 0 6 9" className="ml-[5px] mt-[6px] w-1.5 h-[9px]">
          <path d="M0 0v9l6-4.500z" fill="#e8e8e8" />
        </svg>
        <div className="ml-[10px] mt-[1px] w-[18px] h-[18px] bg-white border border-black flex items-center">
          <svg viewBox="0 0 16 4" className="w-4 h-1">
            <path d="M0 2h16" stroke="#111" strokeWidth="2" />
            <path d="M1 2h14" stroke="#333" strokeWidth="4" strokeDasharray="2 1" />
          </svg>
        </div>
        <Fit className="ml-[6px] w-[58px] text-[13px] leading-[19px] text-[#ececec]">レイヤー 1</Fit>
        <div className="ml-[41px] border-l border-[#343a44]" />
        <svg viewBox="0 0 10 10" className="ml-[5px] mt-[5px] w-2.5 h-2.5">
          <circle cx="5" cy="5" r="4" fill="none" stroke="#b4bac2" strokeWidth="1.300" />
        </svg>
        <div className="ml-[6px] mt-[6px] w-2 h-2 bg-[#5b8bff] border border-black" />
        <svg viewBox="0 0 5 5" className="absolute right-0 top-0 w-[5px] h-[5px]">
          <path d="M0 0h5v5z" fill="#e0e0e0" />
        </svg>
      </div>
    </div>
    <div className="h-[19px] shrink-0 flex items-center pl-[6px]">
      <Fit className="w-[59px] text-[13px] leading-[17px] pb-px text-[#e2e2e2]">1 レイヤー</Fit>
      <svg viewBox="0 0 14 14" className="ml-[31px] w-[14px] h-[14px]" fill="none" stroke="#c4c4c4" strokeWidth="1.300">
        <circle cx="8.500" cy="5.500" r="4" />
        <path d="M5.500 8.500L1 13" />
      </svg>
      <svg viewBox="0 0 12 12" className="ml-[13px] w-3 h-3" fill="none" stroke="#b5b5b5" strokeWidth="1.500">
        <path d="M4 4h7v7H4z" fill="#666" strokeWidth="1" />
        <path d="M1 1h6.500v6.500H1z" />
      </svg>
      <svg viewBox="0 0 15 12" className="ml-[13px] w-[15px] h-3" fill="#c4c4c4">
        <path d="M6 2h9v9h-4l-3-3V5H6z" />
        <path d="M0 1h1v3h4V2l3 2.500L5 7V5H0zM7 9l3 3H7z" />
      </svg>
      <svg viewBox="0 0 11 11" className="ml-[12px] w-[11px] h-[11px]" fill="#c4c4c4">
        <path d="M0 0h11v11H6L5 6H0zM0 7h4v4z" />
      </svg>
      <svg viewBox="0 0 11 12" className="ml-[15px] w-[11px] h-3" fill="none" stroke="#6e6e6e" strokeWidth="1.200">
        <path d="M0 2.500h11M4 2V.6h3V2M1.500 4v7.400h8V4M4 5v5M5.500 5v5M7 5v5" />
      </svg>
      <svg viewBox="0 0 10 10" className="ml-[16px] mt-2 w-2.5 h-2.5" stroke="#777" strokeDasharray="1 1">
        <path d="M8 1.500h2M6 3.500h4M4 5.500h6M2 7.500h8M0 9.500h10" />
      </svg>
    </div>
    <div className="flex-1 flex items-center justify-center border-t border-[#262626]">
      <Grip className="h-[3px]" />
    </div>
  </div>
);

const AppCell: React.FC<ChildProps & { open?: boolean }> = ({ open, children }) => (
  <div className="w-[75px] h-full shrink-0 flex flex-col items-center">
    <svg viewBox="0 0 36 36" className="mt-[12px] w-9 h-9">{children}</svg>
    <div className={`mt-[9px] w-[61px] h-[3px] ${open ? 'bg-[#e58fc4]' : ''}`} />
  </div>
);

const Taskbar = () => (
  <div className="h-[60px] shrink-0 flex bg-[#3d0029]">
    <div className="w-[72px] shrink-0 flex items-center justify-center">
      <svg viewBox="0 0 24 24" className="w-6 h-6" fill="#fff">
        <path d="M0 3.400L9.800 2v9.500H0zM11 1.800L24 0v11.500H11zM0 12.600h9.800V22L0 20.600zM11 12.600h13V24l-13-1.800z" />
      </svg>
    </div>
    <div className="w-[516px] shrink-0 flex items-center bg-[#6d3558]">
      <svg viewBox="0 0 36 36" className="ml-[12px] w-9 h-9" fill="none">
        <circle cx="18" cy="18" r="16" stroke="#a98a9d" strokeWidth="2" />
        <circle cx="18" cy="18" r="14" stroke="#fff" strokeWidth="3.600" />
      </svg>
      <Fit className="ml-[5px] w-[156px] mt-0.5 text-[19px] font-light leading-[28px] text-[#c3a5b8]">ここに入力して検索</Fit>
      <svg viewBox="0 0 18 25" className="ml-[267px] w-[18px] h-[25px]" fill="none" stroke="#b795a9" strokeWidth="1.500">
        <rect x="5" y="1" width="8" height="17" rx="1.500" />
        <path d="M1.500 12v5q0 4 4 4h7q4 0 4-4v-5M9 21v3M5.500 24h7" />
      </svg>
    </div>
    <div className="w-[75px] shrink-0 flex items-center justify-center pr-[3px]">
      <svg viewBox="0 0 30 20" className="w-[30px] h-5" fill="none" stroke="#fff" strokeWidth="1.200">
        <path d="M6.500.6h17v18.800h-17zM4 3.500H.6v13H4M26 3.500h3.400v13H26" />
      </svg>
    </div>

    <AppCell open>
      <circle cx="18" cy="18" r="16.500" fill="#f7cb4d" />
      <path d="M3.700 9.700A16.500 16.500 0 0132.300 9.800H18a8 8 0 00-7.500 5.500z" fill="#dd5144" />
      <path d="M3.700 9.700L11 22a8 8 0 008.500 3.500L16 34.400A16.500 16.500 0 013.700 9.700z" fill="#1ba261" />
      <path d="M18 9.800h14.300A16.500 16.500 0 0116 34.400L25 22z" fill="#ffcd41" />
      <circle cx="18" cy="18" r="8.200" fill="#f4f4f4" />
      <circle cx="18" cy="18" r="6.400" fill="#4f8df5" />
    </AppCell>
    <AppCell>
      <path d="M3 16C4 6 11 2 18 2c10 0 15 7 15 16v3H13c0 6 9 9 17 5v6c-10 5-24 2-24-10 0-6 3-9 7-11-2 2-3 4-3 6h12c0-9-13-9-19-1z" fill="#0178d7" />
    </AppCell>
    <div className="w-[75px] h-full shrink-0 flex flex-col items-center">
      <svg viewBox="0 0 36 36" className="mt-[12px] w-9 h-9">
        <path d="M2 5h13l2 3h17v24H2z" fill="#f8d15f" />
        <path d="M2 10h14l2-2h16v24H2z" fill="#ffe79b" />
        <path d="M5 6.500h4v2H5z" fill="#fff" />
        <path d="M7 19h22v14h-6v-8H13v8H7z" fill="#3bb3e8" />
      </svg>
      <div className="mt-[9px] w-[61px] h-[3px] flex bg-[#e58fc4]">
        <div className="ml-[47px] w-[14px] bg-[#a3668f] border-l border-[#3d0029]" />
      </div>
    </div>
    <AppCell>
      <path d="M11 10V6q1-5 6-5 6 0 7 8M14 10V5q2-3 4-3 3 1 3 7" fill="none" stroke="#fff" strokeWidth="1.500" />
      <path d="M2 11l32-2v24l-9 3-23-4z" fill="#fff" />
      <path d="M8 17l5.500-.5V22H8zM15 16.400l7-.6V22h-7zM8 23.300h5.500v5.500L8 28zM15 23.300h7V30l-7-1z" fill="#3d0029" />
    </AppCell>
    <AppCell>
      <rect x="4" y="2" width="28" height="29" rx="3" fill="#6f86cc" />
      <path d="M22 28l10 7V20z" fill="#6f86cc" />
      <path d="M9 24q0-8 3-11 3-2 5-1h2q2-1 5 1 3 3 3 11-3 1-5 1l-1.500-2h-5L14 25q-3 0-5-1z" fill="#fff" />
      <circle cx="14.500" cy="18.500" r="2" fill="#6f86cc" />
      <circle cx="21.500" cy="18.500" r="2" fill="#6f86cc" />
    </AppCell>
    <AppCell>
      <path d="M20 5.500h13.500v25H20z" fill="#fff" stroke="#2a5699" />
      <path d="M20 9.500h11M20 13h11M20 16.500h11M20 20h11M20 23.500h11M20 27h11" stroke="#2a5699" strokeWidth="1.600" />
      <path d="M2 5.500l19-3.500v32L2 30.500z" fill="#2a5699" />
      <text x="11.500" y="24" textAnchor="middle" fontSize="15" fontWeight="bold" fill="#fff" textLength="13" lengthAdjust="spacingAndGlyphs">W</text>
    </AppCell>
    <AppCell>
      <path d="M20 5.500h13.500v25H20z" fill="#fff" stroke="#1e7145" />
      <path d="M20 9.500h11M20 13.500h11M20 17.500h11M20 21.500h11M20 25.500h11M26 7v22M31 7v22" stroke="#1e7145" strokeWidth="1.400" />
      <path d="M2 5.500l19-3.500v32L2 30.500z" fill="#1e7145" />
      <text x="11.500" y="24" textAnchor="middle" fontSize="17" fontWeight="bold" fill="#fff" textLength="10" lengthAdjust="spacingAndGlyphs">X</text>
    </AppCell>
    <AppCell open>
      <path d="M2 3h32v30H2z" fill="#efefef" />
      <path d="M2 1h30l2 3H2z" fill="#c22020" />
      <path d="M8 28q-2-3 8-6 6-2 12 1 3 2 1 3-5 0-10-7-5-7-3-10 3-1 2 6-2 9-7 12-2 2-3 1z" fill="none" stroke="#d0201e" strokeWidth="1.700" />
    </AppCell>
    <AppCell open>
      <path d="M27 5l6 3v23l-6 2z" fill="#b59654" />
      <path d="M12 4l19 2-4 29-18-6z" fill="#e0eef2" />
      <path d="M12 4l18 2-5 22L1 28z" fill="#58a6bd" />
      <path d="M12 4l9 1-8 24-12-1z" fill="#88c5d6" />
      <path d="M12 3.500l19 2.500" stroke="#ddd" strokeWidth="2" strokeDasharray="1.500 1" />
    </AppCell>
    <AppCell open>
      <path d="M20 6.500h14v23H20z" fill="#fff" stroke="#d24726" />
      <path d="M22 21h10M22 24h10M22 27h7" stroke="#d24726" strokeWidth="1.500" />
      <path d="M26 9v5h5a5 5 0 11-5-5z" fill="none" stroke="#d24726" strokeWidth="1.500" />
      <path d="M2 5.500l19-3.500v32L2 30.500z" fill="#d24726" />
      <text x="11" y="24" textAnchor="middle" fontSize="18" fontWeight="bold" fill="#fff" textLength="9" lengthAdjust="spacingAndGlyphs">P</text>
    </AppCell>
    <AppCell open>
      <path d="M2 1.500h32v31H2z" fill="#2a1501" stroke="#f6a93b" strokeWidth="2" />
      <text x="18" y="23" textAnchor="middle" fontSize="17" fontWeight="bold" fill="#f9ad42" textLength="17" lengthAdjust="spacingAndGlyphs">Ai</text>
    </AppCell>

    <svg viewBox="0 0 18 11" className="ml-[70px] mt-[24px] w-[18px] h-[11px] shrink-0" fill="none" stroke="#fff" strokeWidth="1.400">
      <path d="M.5 10L9 1l8.500 9" />
    </svg>
    <svg viewBox="0 0 24 14" className="ml-[15px] mt-[24px] w-6 h-[14px] shrink-0">
      <path d="M.6.6h20.800v12.800H.6z" fill="none" stroke="#fff" strokeWidth="1.200" />
      <path d="M2.500 2.500h17v9h-17zM22 4.500h2v5h-2z" fill="#fff" />
    </svg>
    <svg viewBox="0 0 20 20" className="ml-[15px] mt-[21px] w-5 h-5 shrink-0" fill="none" stroke="#fff" strokeWidth="1.200">
      <path d="M1 19A18 18 0 0119 1M6 19A13 13 0 0119 6M10.500 19A8.500 8.500 0 0119 10.500" />
      <circle cx="17" cy="17" r="2" fill="#fff" stroke="none" />
    </svg>
    <svg viewBox="0 0 23 20" className="ml-[13px] mt-[20px] w-[23px] h-5 shrink-0" fill="none" stroke="#fff" strokeWidth="1.200">
      <path d="M1 6.500h3L9 1.500v17l-5-5H1z" />
      <path d="M12 7q2 3 0 6" />
      <path d="M15 4.500q4 5.500 0 11M18.500 2q5 8 0 16" stroke="#97748a" />
    </svg>
    <Fit className="ml-[10px] w-[23px] text-[24px] leading-[58px] font-medium text-white">あ</Fit>
    <div className="ml-[15px] w-[94px] shrink-0 flex flex-col items-center text-white font-['Open_Sans',sans-serif] text-[16px]">
      <Fit className="mt-[5px] w-[42px] leading-[22px]">11:17</Fit>
      <Fit className="mt-[6px] w-[93px] leading-[22px]">2017/04/25</Fit>
    </div>
    <svg viewBox="0 0 40 40" className="ml-[29px] mt-[17px] w-10 h-10 shrink-0">
      <path d="M0 1h24v18H14l-4 5-2-5H0z" fill="#fff" />
      <path d="M5 6h14M5 10h14M5 14h12" stroke="#3d0029" strokeWidth="1.500" />
      <circle cx="23" cy="24" r="13.500" fill="#750d55" stroke="#b98aa8" />
      <path d="M10 20a13.500 13.500 0 0114-9.500V19H14z" fill="#b477a0" opacity=".75" />
      <text x="23" y="30" textAnchor="middle" fontSize="16" fontWeight="bold" fill="#fff" textLength="16" lengthAdjust="spacingAndGlyphs">10</text>
    </svg>
    <div className="ml-[15px] w-px h-full bg-[#96708a]" />
  </div>
);

export default function App() {
  return (
    <div className="relative w-[1920px] h-[1080px] flex flex-col overflow-hidden bg-[#4a4a4a] font-['Noto_Sans','Noto_Sans_CJK_JP',sans-serif]">
      <MenuBar />
      <ControlBar />
      <div className="flex-1 min-h-0 flex">
        <Toolbar />
        <div className="flex-1 min-w-0 flex flex-col">
          <div className="h-5 shrink-0 flex bg-[#303030] border-b border-[#4a4a4a]">
            <div className="w-[249px] flex bg-[#4a4a4a] border-r border-[#262626] text-[12px] leading-[19px] text-[#e2e2e2]">
              <Fit className="ml-[9px] w-[216px]">名称未設定-1* @ 100% (CMYK/プレビュー)</Fit>
              <svg viewBox="0 0 7 7" className="ml-[10px] mt-[6px] w-[7px] h-[7px]" stroke="#dcdcdc" strokeWidth="1.400">
                <path d="M.5.5l6 6M6.500.5l-6 6" />
              </svg>
            </div>
          </div>
          <div className="flex-1 min-h-0 flex">
            <Canvas />
            <div className="w-[18px] shrink-0 flex flex-col items-center justify-between bg-[#363636] border-l border-r-2 border-[#282828] pt-1.5 pb-[5px]">
              <svg viewBox="0 0 9 7" className="w-[9px] h-[7px]">
                <path d="M0 7h9L4.500 0z" fill="#dedede" />
              </svg>
              <svg viewBox="0 0 9 7" className="w-[9px] h-[7px]">
                <path d="M0 0h9L4.500 7z" fill="#dedede" />
              </svg>
            </div>
          </div>
          <StatusBar />
        </div>
        <Dock />
      </div>
      <Taskbar />
      <TearOffPanel />
      <TypeToolMenu />
      <LayersPanel />
    </div>
  );
}
